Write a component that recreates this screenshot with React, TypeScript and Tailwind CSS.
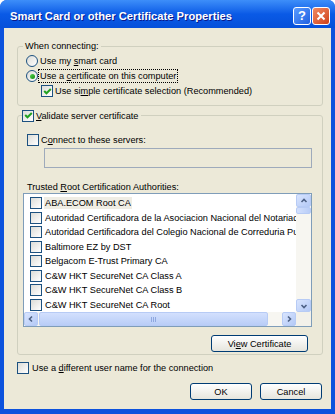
import React from 'react';

const certs = [
  'ABA.ECOM Root CA',
  'Autoridad Certificadora de la Asociacion Nacional del Notariado Mexicano',
  'Autoridad Certificadora del Colegio Nacional de Correduria Publica Mexicana',
  'Baltimore EZ by DST',
  'Belgacom E-Trust Primary CA',
  'C&W HKT SecureNet CA Class A',
  'C&W HKT SecureNet CA Class B',
  'C&W HKT SecureNet CA Root',
];

function Check({ checked }: { checked?: boolean }) {
  return (
    <span className="w-[12px] h-[12px] shrink-0 border border-[#1C5180] bg-gradient-to-br from-[#dcdcd7] to-white flex items-center justify-center">
      {checked && (
        <svg width="9" height="9" viewBox="0 0 9 9">
          <path d="M1.2 4 L3.5 6.3 L7.8 2" stroke="#21a121" strokeWidth="2" fill="none" />
        </svg>
      )}
    </span>
  );
}

function Radio({ checked }: { checked?: boolean }) {
  return (
    <span className="w-[12px] h-[12px] shrink-0 rounded-full border border-[#1C5180] bg-gradient-to-br from-[#dcdcd7] to-white flex items-center justify-center">
      {checked && <span className="w-[5px] h-[5px] rounded-full bg-gradient-to-br from-[#55d551] to-[#0b8b0b]" />}
    </span>
  );
}

function Arrow({ dir }: { dir: 'up' | 'down' | 'left' | 'right' }) {
  const d = {
    up: 'M1.5 5 L4 2.5 L6.5 5',
    down: 'M1.5 3 L4 5.5 L6.5 3',
    left: 'M5 1.5 L2.5 4 L5 6.5',
    right: 'M3 1.5 L5.5 4 L3 6.5',
  }[dir];
  return (
    <svg width="8" height="8" viewBox="0 0 8 8">
      <path d={d} stroke="#4d6185" strokeWidth="1.6" fill="none" />
    </svg>
  );
}

function ScrollBtn({ dir, className }: { dir: 'up' | 'down' | 'left' | 'right'; className: string }) {
  return (
    <div className={`${className} shrink-0 rounded-[2px] border border-[#b7cbf5] bg-gradient-to-br from-[#d9e5fe] to-[#b4c9f6] flex items-center justify-center`}>
      <Arrow dir={dir} />
    </div>
  );
}

function XpButton({ children, className }: { children: React.ReactNode; className: string }) {
  return (
    <div className={`${className} rounded-[3px] border border-[#003c74] bg-gradient-to-b from-white to-[#e6e5dd] flex items-center justify-center text-black`}>
      {children}
    </div>
  );
}

export default function App() {
  return (
    <div className="w-[335px] h-[414px] flex flex-col bg-[#0c52dd] rounded-t-[7px] overflow-hidden font-['Liberation_Sans',Arial,sans-serif] text-[9.2px] leading-[12px] text-black">
      {/* title bar */}
      <div className="h-[28px] shrink-0 flex items-start pt-[7px] pl-[10px] pr-[5px] bg-gradient-to-b from-[#3d8ef9] via-[#0a5ae6] to-[#0550da]">
        <div className="flex-1 h-[18px] leading-[18px] text-white font-bold text-[11.2px] [text-shadow:1px_1px_#0a1a8a]">
          Smart Card or other Certificate Properties
        </div>
        <div className="flex gap-[1px]">
          <div className="w-[18px] h-[18px] rounded-[3px] border border-white bg-gradient-to-br from-[#5a9bff] to-[#1f5fe0] flex items-center justify-center text-white font-bold text-[13px]">
            ?
          </div>
          <div className="w-[18px] h-[18px] rounded-[3px] border border-white bg-gradient-to-br from-[#f08a62] to-[#cf3f14] flex items-center justify-center">
            <svg width="10" height="10" viewBox="0 0 10 10">
              <path d="M1.5 1.5 L8.5 8.5 M8.5 1.5 L1.5 8.5" stroke="white" strokeWidth="2" />
            </svg>
          </div>
        </div>
      </div>

      {/* body */}
      <div className="flex-1 mx-[4px] mb-[5px] bg-[#ECE9D8] flex flex-col pl-[13px]">
        <fieldset className="mt-[12px] w-[306px] border border-[#d0d0bf] rounded-[3px]">
          <legend className="ml-[5px] px-[2px] leading-[12px]">When connecting:</legend>
          <div className="pl-[8px] pt-[1.5px] pb-[6px]">
            <div className="h-[15px] flex items-center gap-[2px]">
              <Radio />
              <span>Use my <u>s</u>mart card</span>
            </div>
            <div className="h-[15px] flex items-center">
              <Radio checked />
              <span className="border border-dotted border-black px-[1px] leading-[12px]">
                Use a <u>c</u>ertificate on this computer
              </span>
            </div>
            <div className="h-[15px] flex items-center gap-[2px] pl-[15px]">
              <Check checked />
              <span>Use si<u>m</u>ple certificate selection (Recommended)</span>
            </div>
          </div>
        </fieldset>

        <fieldset className="mt-[4px] w-[306px] border border-[#d0d0bf] rounded-[3px]">
          <legend className="ml-[4px] pr-[3px]">
            <span className="flex items-center gap-[2px] h-[12px]">
              <Check checked />
              <span><u>V</u>alidate server certificate</span>
            </span>
          </legend>
          <div className="pl-[5px] pb-[2px]">
            <div className="mt-[11px] ml-[4px] h-[15px] flex items-center gap-[2px]">
              <Check />
              <span>C<u>o</u>nnect to these servers:</span>
            </div>
            <div className="ml-[21px] w-[268px] h-[20px] border border-[#9eaabb] bg-[#ECE9D8]" />
            <div className="mt-[13.5px] ml-[4px] h-[12px]">
              Trusted <u>R</u>oot Certification Authorities:
            </div>

            {/* certificate list */}
            <div className="w-[289px] h-[134px] border border-[#7f9db9] bg-white grid grid-cols-[272px_15px] grid-rows-[118px_14px]">
              <div className="pt-[2px] overflow-hidden">
                {certs.map((c, i) => (
                  <div key={c} className="h-[14.5px] flex items-center pl-[6px] gap-[2px] whitespace-nowrap">
                    <Check />
                    <span className={`px-[1px] ${i === 0 ? 'bg-[#efede4]' : ''}`}>{c}</span>
                  </div>
                ))}
              </div>
              <div className="flex flex-col bg-[#f7f6f1]">
                <ScrollBtn dir="up" className="w-[15px] h-[13px]" />
                <div className="h-[7px] rounded-[2px] border border-[#b7cbf5] bg-gradient-to-r from-[#d3e0fd] to-[#b9cdf7]" />
                <div className="flex-1" />
                <ScrollBtn dir="down" className="w-[15px] h-[13px]" />
              </div>
              <div className="flex bg-[#f7f6f1]">
                <ScrollBtn dir="left" className="w-[14px] h-[14px]" />
                <div className="ml-[1px] w-[229px] h-[14px] rounded-[2px] border border-[#b7cbf5] bg-gradient-to-b from-[#d3e0fd] to-[#b9cdf7] flex items-center justify-center gap-[1px]">
                  <span className="w-[1px] h-[5px] bg-[#8fa8e0]" />
                  <span className="w-[1px] h-[5px] bg-[#8fa8e0]" />
                  <span className="w-[1px] h-[5px] bg-[#8fa8e0]" />
                </div>
                <div className="flex-1" />
                <ScrollBtn dir="right" className="w-[14px] h-[14px]" />
              </div>
              <div className="bg-[#f3f1ea]" />
            </div>

            <XpButton className="mt-[8px] ml-[188px] w-[97px] h-[17px]">
              <span>Vi<u>e</u>w Certificate</span>
            </XpButton>
          </div>
        </fieldset>

        <div className="mt-[5.5px] h-[15px] flex items-center gap-[3px]">
          <Check />
          <span>Use a <u>d</u>ifferent user name for the connection</span>
        </div>

        <div className="mt-[7.5px] flex gap-[8px] pl-[173px]">
          <XpButton className="w-[62px] h-[17px]">OK</XpButton>
          <XpButton className="w-[62px] h-[17px]">Cancel</XpButton>
        </div>
      </div>
    </div>
  );
}
